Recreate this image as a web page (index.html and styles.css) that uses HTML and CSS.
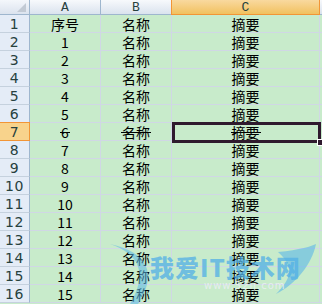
FILE: index.html
```html
<!DOCTYPE html>
<html>
<head>
<meta charset="utf-8">
<link rel="stylesheet" href="styles.css">
</head>
<body>
<div class="sheet">
  <div class="grid">
    <div class="corner"><span class="tri"></span></div>
    <div class="colh">A</div>
    <div class="colh">B</div>
    <div class="colh sel">C</div>
    <div class="colh edge"></div>

    <div class="rowh">1</div><div class="cell">序号</div><div class="cell">名称</div><div class="cell">摘要</div><div class="cell edge"></div>
    <div class="rowh">2</div><div class="cell">1</div><div class="cell">名称</div><div class="cell">摘要</div><div class="cell edge"></div>
    <div class="rowh">3</div><div class="cell">2</div><div class="cell">名称</div><div class="cell">摘要</div><div class="cell edge"></div>
    <div class="rowh">4</div><div class="cell">3</div><div class="cell">名称</div><div class="cell">摘要</div><div class="cell edge"></div>
    <div class="rowh">5</div><div class="cell">4</div><div class="cell">名称</div><div class="cell">摘要</div><div class="cell edge"></div>
    <div class="rowh">6</div><div class="cell">5</div><div class="cell">名称</div><div class="cell">摘要</div><div class="cell edge"></div>
    <div class="rowh sel">7</div><div class="cell"><span class="strike">6</span></div><div class="cell"><span class="strike">名称</span></div><div class="cell"><span class="strike">摘要</span></div><div class="cell edge"></div>
    <div class="rowh">8</div><div class="cell">7</div><div class="cell">名称</div><div class="cell">摘要</div><div class="cell edge"></div>
    <div class="rowh">9</div><div class="cell">8</div><div class="cell">名称</div><div class="cell">摘要</div><div class="cell edge"></div>
    <div class="rowh">10</div><div class="cell">9</div><div class="cell">名称</div><div class="cell">摘要</div><div class="cell edge"></div>
    <div class="rowh">11</div><div class="cell">10</div><div class="cell">名称</div><div class="cell">摘要</div><div class="cell edge"></div>
    <div class="rowh">12</div><div class="cell">11</div><div class="cell">名称</div><div class="cell">摘要</div><div class="cell edge"></div>
    <div class="rowh">13</div><div class="cell">12</div><div class="cell">名称</div><div class="cell">摘要</div><div class="cell edge"></div>
    <div class="rowh">14</div><div class="cell">13</div><div class="cell">名称</div><div class="cell">摘要</div><div class="cell edge"></div>
    <div class="rowh">15</div><div class="cell">14</div><div class="cell">名称</div><div class="cell">摘要</div><div class="cell edge"></div>
    <div class="rowh">16</div><div class="cell">15</div><div class="cell">名称</div><div class="cell">摘要</div><div class="cell edge"></div>
  </div>

  <div class="selection"><span class="handle"></span></div>

  <div class="watermark">
    <svg class="wing" width="220" height="60" viewBox="0 0 220 60">
      <path d="M10 0 C 40 10, 48 30, 30 60 L 38 60 C 58 30, 48 8, 10 0 Z" fill="#5bb8e8" opacity="0.55"/>
      <path d="M178 8 C 200 6, 212 2, 216 0 C 212 20, 196 40, 176 50 C 190 36, 196 24, 178 8 Z" fill="#5bb8e8" opacity="0.6"/>
    </svg>
    <div class="wm-title">我爱IT技术网</div>
    <div class="wm-url">www.52ij.com</div>
  </div>
</div>
</body>
</html>
```

FILE: styles.css
```css
* { box-sizing: border-box; }
html, body { margin: 0; padding: 0; }
body { width: 322px; height: 304px; overflow: hidden; background: #c8ebcb; }

.sheet { position: relative; width: 322px; height: 304px; }

.grid {
  display: grid;
  grid-template-columns: 30px 71px 71px 148px 2px;
  grid-template-rows: 15px repeat(16, 18px);
}

.corner {
  position: relative;
  background: linear-gradient(#f4f7fb, #dbe3ee);
  border-right: 1px solid #9eb6ce;
  border-bottom: 1px solid #9eb6ce;
}
.tri {
  position: absolute;
  right: 3px;
  bottom: 2px;
  width: 0; height: 0;
  border-left: 9px solid transparent;
  border-bottom: 9px solid #c2cad4;
}

.colh {
  display: flex;
  align-items: center;
  justify-content: center;
  background: linear-gradient(#f7f9fc, #dae3ee);
  border-right: 1px solid #9eb6ce;
  border-bottom: 1px solid #9eb6ce;
  font-family: "Liberation Mono", monospace;
  font-size: 13px;
  color: #27413e;
  line-height: 1;
  padding-top: 1px;
}
.colh.sel {
  background: linear-gradient(#f9d99f, #f1c15f);
  border-bottom: 1px solid #f29536;
  border-left: 1px solid #f29536;
  border-right: 1px solid #f29536;
  margin-left: -1px;
}
.colh.edge { border-right: none; background: linear-gradient(#f7f9fc, #dae3ee); }

.rowh {
  display: flex;
  align-items: center;
  justify-content: center;
  background: #e4ecf7;
  border-right: 1px solid #9eb6ce;
  border-bottom: 1px solid #c5d1de;
  font-family: "DejaVu Sans", sans-serif;
  font-size: 14px;
  color: #27413e;
  letter-spacing: 0.5px;
}
.rowh.sel {
  background: #f8d38c;
  border-right: 1px solid #f29536;
  border-bottom: 1px solid #f29536;
  border-top: 1px solid #f29536;
  margin-top: -1px;
}

.cell {
  display: flex;
  align-items: center;
  justify-content: center;
  background: #c8ebcb;
  border-right: 1px solid #d0d7e5;
  border-bottom: 1px solid #d0d7e5;
  font-family: "Noto Sans CJK SC", sans-serif;
  font-size: 14px;
  color: #000;
  line-height: 1;
}
.strike {
  position: relative;
  display: inline-block;
}
.strike::after {
  content: "";
  position: absolute;
  left: -1px;
  right: -1px;
  top: 50%;
  height: 1px;
  background: #000;
}
.cell.edge { border-right: none; }

.selection {
  position: absolute;
  left: 172px;
  top: 122px;
  width: 149px;
  height: 21px;
  border: 3px solid #2f1a2e;
}
.handle {
  position: absolute;
  right: -6px;
  bottom: -6px;
  width: 7px;
  height: 7px;
  background: #2f1a2e;
  border: 1px solid #ffffff;
}

.watermark {
  position: absolute;
  left: 100px;
  top: 244px;
  width: 222px;
  height: 60px;
  pointer-events: none;
}
.wing { position: absolute; left: 0; top: 0; }
.wm-title {
  position: absolute;
  left: 50px;
  top: 11px;
  font-family: "Noto Sans CJK SC", sans-serif;
  font-weight: 900;
  font-size: 24px;
  line-height: 1;
  letter-spacing: 1px;
  color: rgba(82, 176, 230, 0.75);
}
.wm-url {
  position: absolute;
  left: 104px;
  top: 37px;
  font-family: "DejaVu Sans", sans-serif;
  font-size: 10px;
  line-height: 1;
  letter-spacing: 1px;
  color: rgba(235, 240, 245, 0.85);
}
```
